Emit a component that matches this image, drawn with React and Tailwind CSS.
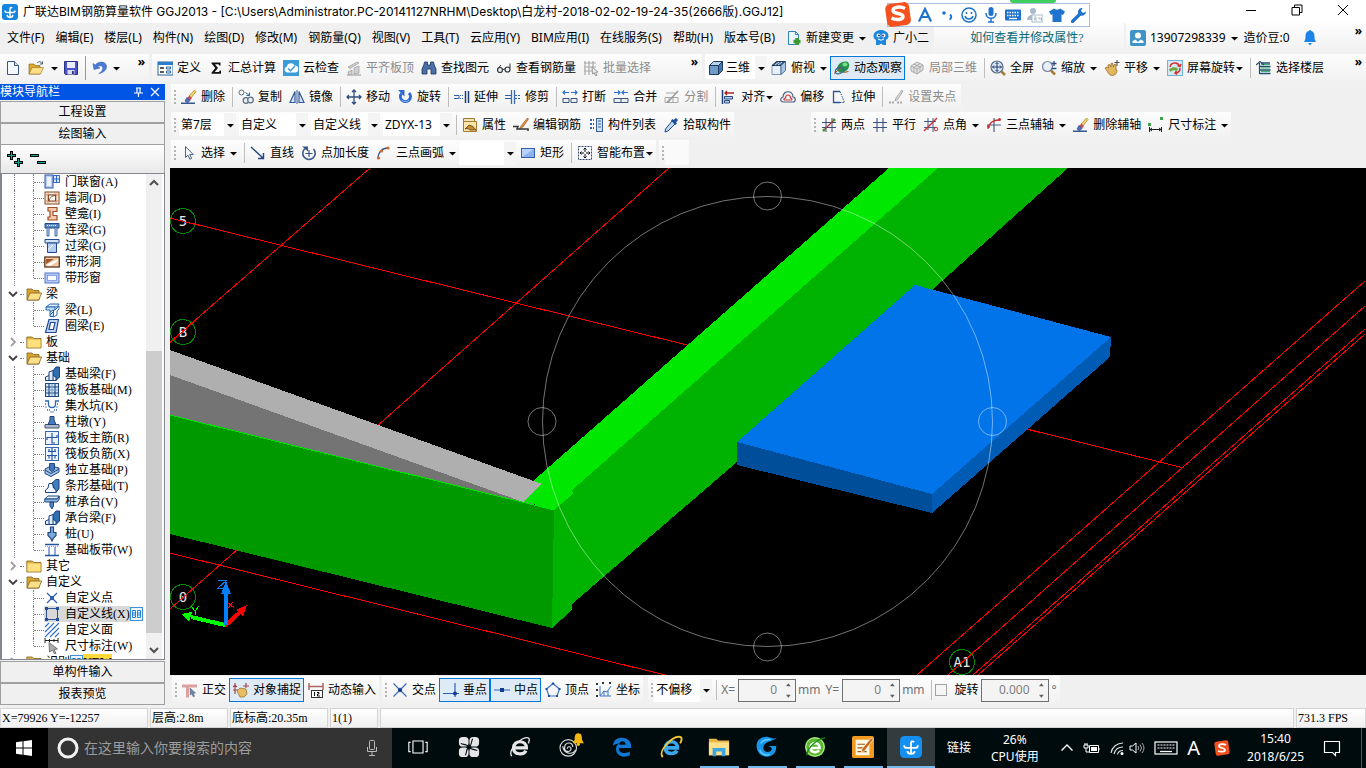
import { useState } from "react";

const UI_FONT = "font-['Noto_Sans','Noto_Sans_CJK_SC',sans-serif]";
const TITLE_FONT = "font-['Inter','Noto_Sans_CJK_SC',sans-serif]";
const SONG_FONT = "font-['Liberation_Serif','Noto_Sans_CJK_SC',serif]";

const BLUE = "#2f6fd0";

// 16x16 drawings
const ICONS = {
  logo: <><rect x="0" y="0" width="16" height="16" rx="3" fill="#1585e0" /><path d="M10.500 4Q8 2.500 8 5v8M3 6.500q0 2 2 2h6q2 0 2-2M5 11q.5 2.500 3 2.500T11 11" fill="none" stroke="#fff" strokeWidth="1.400" /></>,
  newDoc: <><path d="M2.500 1.500h7l4 4v9h-11z" fill="#f4f9ff" stroke="#3d5478" /><path d="M9.500 1.500v4h4" fill="#cfe0f5" stroke="#3d5478" /></>,
  open: <><path d="M1 4h5l1 1.500h5V14H1z" fill="#e0a92e" stroke="#7a5a12" strokeWidth=".6" /><path d="M4 7.500h11.500L12.500 14H1z" fill="#ffdf85" stroke="#8d6a1c" strokeWidth=".6" /><path d="M9 3c2-2 4-1.500 5 .5M14.500 1.500v2.500H12" fill="none" stroke="#4a5b78" /></>,
  save: <><path d="M1.500 1.500h13v13h-12l-1-1z" fill="#4b55c8" stroke="#2b3186" /><rect x="4" y="2" width="8" height="6" fill="#e9edff" /><rect x="4.500" y="10" width="7" height="4.500" fill="#d9dce8" /><rect x="9" y="11" width="1.800" height="3" fill="#2b3186" /></>,
  undo: <><path d="M1 3.500l1 6 6-1.500-2.200-1.300c2-2 5-1 5 1.500 0 2.300-1.800 4-4 5.300 4-.6 7.700-3 7.700-7C14.500 2 7.500 0 3.300 5z" fill="#4b7ad8" stroke="#2a55a8" strokeWidth=".5" /></>,
  define: <><rect x="1" y="2" width="15" height="13" fill="#fff" stroke="#2c6398" /><rect x="1" y="2" width="15" height="3" fill="#2c7cc9" /><path d="M3 8h4M3 12h4" stroke="#222" strokeWidth="1.500" /><path d="M9.500 7h4v2h-4zM9.500 11h4v2h-4z" fill="none" stroke="#2c6398" /></>,
  sigma: <path d="M3.500 2.500h9v3h-1.300l-.7-1.300H7L10 8l-3.300 4H11l.8-1.500H13v3.200H3.500v-1L7.300 8 3.500 3.500z" fill="#111" />,
  cloud: <><rect width="16" height="16" fill="#3a9bd9" /><path d="M4 12.500a3 3 0 0 1-.3-5.800A4.200 4.200 0 0 1 11.500 5.500 3.500 3.500 0 0 1 12 12.500z" fill="#fff" /><path d="M5 8.500l2.500 2.300L12 6" fill="none" stroke="#3a9bd9" strokeWidth="1.500" /></>,
  flatten: <><path d="M2 7l9-5 2 1-9 5.500zM2 12l4-2v4l-3 1zM8 8l5-2v7l-5 1z" fill="#d0d0d0" stroke="#999" strokeWidth=".7" /><path d="M1 15h14" stroke="#b0b0b0" strokeWidth="1.500" /></>,
  binoc: <path d="M3.500 2h3v3h3V2h3l.7 3 1.800 4v5h-5V9H6v5H1V9l1.800-4z" fill="#4c70a8" stroke="#1c3260" strokeWidth=".8" />,
  glasses: <><circle cx="4" cy="10" r="2.500" fill="#e8eef5" stroke="#333" strokeWidth="1.200" /><circle cx="11.500" cy="9.500" r="2.500" fill="#e8eef5" stroke="#333" strokeWidth="1.200" /><path d="M6.500 9.500l2.500-.5M2 8.500L5 5M14 8V3.500" fill="none" stroke="#333" /></>,
  batch: <><path d="M2 1v14M6 1v14M10 1v7M1 3h12M1 7h12M1 11h8" stroke="#aaa" strokeWidth="1.200" /><path d="M9 7l6 5-2.500.3 1.500 3-1.500.5-1.300-3L9.500 14z" fill="#eee" stroke="#999" /></>,
  cube: <><path d="M1.500 5.500h9v9h-9z" fill="#6f9cc8" stroke="#203a5c" /><path d="M1.500 5.500L5.500 1.500h9l-4 4z" fill="#b6d3ee" stroke="#203a5c" /><path d="M10.500 5.500l4-4v9l-4 4z" fill="#4778aa" stroke="#203a5c" /></>,
  topView: <><path d="M1 5.500h9v9H1z" fill="#e6f0fa" stroke="#7a93b0" /><path d="M1 5.500L5.500 1.500h9l-4.500 4z" fill="#315f92" stroke="#1b3454" /><path d="M10 5.500l4.500-4v9L10 14.500z" fill="#a9c7e4" stroke="#4f7094" /><path d="M4 5l4-3M7 5l4-3" stroke="#fff" strokeWidth=".8" /></>,
  orbit: <><path d="M3 9C3 4 8 1 12 1.500c4 .5 4 5 1.500 8S7 13 5 12.500z" fill="#259447" /><ellipse cx="11" cy="4.500" rx="2.500" ry="2" fill="#7bdc8a" /><path d="M1.500 12.500C.5 9 5 6.500 8 7.500s2 4-1 5.500-5 1-5.500-.5z" fill="none" stroke="#356a9c" strokeWidth="1.300" /><path d="M0 13.500L8 7M9.500 12.500l5-1" stroke="#a34a20" /></>,
  local3d: <><path d="M2 6l6-4 6 3v5l-6 4-6-3z" fill="#e2e2e2" stroke="#aaa" /><path d="M2 6l6 3 6-4M8 9v5M5 4l6 3M5 7.500v5M11 3.500L5 7.500M11 7v5" fill="none" stroke="#aaa" /></>,
  fullscreen: <><circle cx="7" cy="7" r="6" fill="#dbe8f6" stroke="#5a6a80" strokeWidth="1.200" /><path d="M7 2.500v9M2.500 7h9M5.500 4L7 2.500 8.500 4M5.500 10L7 11.500 8.500 10M4 5.500L2.500 7 4 8.500M10 5.500L11.500 7 10 8.500" fill="none" stroke="#223f73" /><path d="M11.500 11.500l3.500 3.500" stroke="#a87a35" strokeWidth="2.500" /></>,
  zoom: <><circle cx="6.500" cy="6.500" r="5" fill="#e8eff8" stroke="#74839a" strokeWidth="1.200" /><path d="M10 10.500l4 4" stroke="#a87a35" strokeWidth="2.500" /><path d="M13 1v5M10.500 3.500h5M10.500 8.500h5" stroke="#2c4e86" strokeWidth="1.300" /></>,
  pan: <><path d="M1 8l2-1 1.500 1L4 5l1.500-.5L7 7V3.500L8.500 3l1 4 1-3 1.500.5L12 9l1 2c-.5 3-2.500 4.500-5 4.500C5 15.500 4 12 1 8z" fill="#e2b65a" stroke="#8a6420" strokeWidth=".7" /><path d="M13 0v6M10.500 2.500h5" stroke="#444" /></>,
  screenRot: <><rect x=".5" y=".5" width="15" height="15" fill="#d5e9f7" stroke="#71b2d6" /><path d="M3 7a5 5 0 0 1 9.500-1M13 8c0 3-2 5-5 5M10.500 5.500L13 6.500l1-2.500M9.500 11L8 13l2 1.500" fill="none" stroke="#d8302a" strokeWidth="1.500" /><path d="M2.500 10.500l4-2 4 1" stroke="#71a83c" strokeWidth="3" fill="none" /></>,
  floors: <><path d="M5 3h9M3.500 6.500h11M3.500 10h11M3.500 13.500h11" stroke="#1f4f70" strokeWidth="1.500" /><path d="M5 4.500h9M5 8h9M5 11.500h9" stroke="#3fb56e" /><path d="M0 5l4-3.500L8 5M3.500 3v11" fill="none" stroke="#274a70" strokeWidth="1.200" /></>,
  brush: <><path d="M13.500 1L15 2.500 10 9 8 7z" fill="#f7d469" stroke="#8a6d1d" strokeWidth=".6" /><path d="M8.500 6.500L11 9l-2 2.500L6 9z" fill="#c84e58" /><path d="M6 8.500l3 3L6.500 14 4 12z" fill="#4f71bd" stroke="#223a75" strokeWidth=".6" /><path d="M0 13.500h14v1.500H0z" fill="#35578b" /></>,
  copy: <><circle cx="3.500" cy="3.500" r="2.500" fill="none" stroke="#5c6c80" /><circle cx="8" cy="11.500" r="2.800" fill="#e8edf4" stroke="#5c6c80" strokeWidth="1.200" /><circle cx="12.500" cy="11" r="2.800" fill="#e8edf4" stroke="#5c6c80" strokeWidth="1.200" /><path d="M7.500 3.500l4 3M11.500 3.500v3h-3" fill="none" stroke="#3767a6" /></>,
  mirror: <><path d="M6 2.500v11H1zM10 2.500v11h5z" fill="#d6e4f5" stroke="#335b96" strokeWidth="1.200" /><path d="M8 1v14" stroke="#335b96" /></>,
  move: <path d="M8 1v14M1 8h14M6 3l2-2 2 2M6 13l2 2 2-2M3 6L1 8l2 2M13 6l2 2-2 2" fill="none" stroke="#2f4f7c" strokeWidth="1.300" />,
  rotate: <><path d="M4.500 4.500a5 5 0 1 0 7.500-.5" fill="none" stroke="#2f6ad0" strokeWidth="3" /><path d="M1 1h6.500v6.500z" fill="#2f6ad0" /><path d="M4.500 11a5 5 0 0 0 7.500 0" fill="none" stroke="#86b4f3" /></>,
  extend: <><path d="M0 6.500h5v3H0" fill="none" stroke="#2f5faa" /><path d="M6 6.500h4M6 9.500h4" stroke="#2f5faa" strokeDasharray="1 1" /><path d="M11.500 2v12M14.500 2v12" stroke="#1f3f77" strokeWidth="1.500" /></>,
  trim: <><path d="M0 6.500h6M0 9.500h6" stroke="#2f5faa" /><path d="M10 6.500h5M10 9.500h5" stroke="#2f5faa" strokeDasharray="2 1" /><path d="M6.500 1v14M9.500 1v14" stroke="#3a6db0" strokeWidth="1.300" /></>,
  breakIcon: <><path d="M1 3.500h6M9 3.500h6M3 1.500l-2 2 2 2M13 1.500l2 2-2 2" fill="none" stroke={BLUE} strokeWidth="1.200" /><path d="M1 9.500h6v4H1zM9 9.500h6v4H9z" fill="#eee" stroke="#38537c" /></>,
  merge: <><path d="M1 3.500h6M9 3.500h6M5 1.500l2 2-2 2M11 1.500l-2 2 2 2" fill="none" stroke={BLUE} strokeWidth="1.200" /><path d="M1 9.500h14v4H1zM8 9.500v4" fill="#eee" stroke="#38537c" /></>,
  split: <><path d="M1 8.500h13v5H1zM5 8.500v5M9 8.500v5M2 4h10" fill="none" stroke="#a8a8a8" /><path d="M14 2L5 12l-2 1" fill="none" stroke="#999" strokeWidth="1.500" /></>,
  align: <><path d="M1.500 1v14" stroke="#1f3f77" strokeWidth="1.500" /><path d="M3.500 7.500h8v2.500h-8zM3.500 11.500h5v2.500h-5z" fill="#b4cff0" stroke="#2c4a80" /><path d="M4 4h9M6 2L4 4l2 2" fill="none" stroke="#b32525" strokeWidth="1.400" /></>,
  offset: <><path d="M3 13C-1 12 1 8 3 8c0-7 10-7 10 0 3 0 3 5 0 5z" fill="#eef2f8" stroke="#4b5f80" strokeWidth="1.200" /><path d="M5 11c-2 0-1-2 .5-2 0-4 5-4 5 0 1.500 0 2 2 .5 2z" fill="none" stroke="#ce4036" strokeWidth="1.200" /></>,
  stretch: <><path d="M9 2.500H2.500v11H9" fill="none" stroke="#2c5694" strokeWidth="1.300" /><path d="M9 2.500l4.500 11H9" fill="none" stroke="#2c5694" strokeDasharray="1.500 1" /></>,
  gripPt: <><path d="M14 1L8 9l-1 3 3-2 5-8z" fill="#ddd" stroke="#aaa" /><path d="M1 13.500h5M9 13.500h5" stroke="#aaa" strokeWidth="2" strokeDasharray="2 1" /></>,
  props: <><path d="M1.500 1.500h11v3h-11z" fill="#f3e3b8" stroke="#9c7a2e" /><path d="M1.500 4.500h13v10h-13z" fill="#fbe6a8" stroke="#a57c2b" /><path d="M3 12l4-4 4 1.500 3 3.500H8l-2-1.500z" fill="#c98a30" stroke="#553c16" strokeWidth=".8" /></>,
  editRebar: <><path d="M14.500 1L8 9l-1.500 3L10 10l5.500-8z" fill="#e5973a" stroke="#7e4a18" strokeWidth=".6" /><path d="M0 9.500h5L4 12h8M12 12h3v2" fill="none" stroke="#333" strokeWidth="1.500" /></>,
  compList: <><path d="M2 3h4M2 7h4M2 11h4" stroke="#3b5f97" strokeWidth="2" strokeDasharray="2 1" /><rect x="8.500" y="1.500" width="6" height="13" fill="#cfe0f5" stroke="#3b5f97" /><path d="M10 4h3M10 7h3M10 10h3" stroke="#3b5f97" /></>,
  picker: <><path d="M9 4l3 3-7 7-3 1 .5-3z" fill="#bcd8f4" stroke="#27497c" /><path d="M8 3.500L12.500 8 14 6.500l-1-1 2-2.500L13 1l-2.500 2-1-1z" fill="#1f4f9a" /></>,
  twoPt: <><path d="M5 1v14M11 1v14M1 5.500h14M1 10.500h14" stroke="#3c4f75" /><path d="M2 14L14 2" stroke="#a33" strokeWidth="1.200" /><circle cx="3" cy="13" r="1.500" fill="#46953a" /><circle cx="13" cy="3" r="1.500" fill="#46953a" /></>,
  parallel: <path d="M5 1v14M11 1v14M1 5.500h14M1 10.500h14" stroke="#3c4f85" strokeWidth="1.100" />,
  ptAngle: <><path d="M5 1v12M10 1v14M1 4.500h12M1 10.500h12" stroke="#3c5d95" /><path d="M1 14L14 1" stroke="#c93131" strokeWidth="1.500" /><circle cx="13" cy="12" r="1.800" fill="none" stroke="#c93131" /></>,
  aux3: <><path d="M8 1v14M1 8h14" stroke="#4c5f86" strokeWidth="1.200" /><path d="M2 12C3 6 6 3 13 3" fill="none" stroke="#c93131" strokeWidth="1.300" /><circle cx="13.500" cy="2.500" r="1.500" fill="#c93131" /><circle cx="2.500" cy="9.500" r="1.500" fill="#c93131" /></>,
  dim: <><rect x="0" y="6" width="3" height="3" fill="#3ea447" /><rect x="12" y="0" width="3" height="3" fill="#3ea447" /><path d="M1.500 10v5M13.500 10v5M2 12.500h11M4 11l-2 1.500L4 14M11 11l2 1.500-2 1.500" fill="none" stroke="#222" /></>,
  select: <path d="M4.500 1.500v11l2.500-2.300 1.800 4 1.800-.8-1.800-3.800h3.500z" fill="#f5f7fa" stroke="#4d6180" />,
  line: <path d="M1 2l12 11M13.500 8v5.500H8" fill="none" stroke="#24467e" strokeWidth="1.400" />,
  ptLen: <><path d="M4 3.500a6.200 6.200 0 1 0 8.500.5" fill="none" stroke="#3a5688" strokeWidth="1.600" /><path d="M8 5v7M4.500 8.500h7" stroke="#3a5688" strokeWidth="1.200" /><path d="M1 1.500h6v5z" fill="#3a5688" /></>,
  arc3: <><path d="M2 14C2 7 6 3 12 3" fill="none" stroke="#34558c" strokeWidth="1.300" /><circle cx="2.500" cy="13" r="1.600" fill="#d8652b" /><circle cx="5.500" cy="6" r="1.600" fill="#d8652b" /><circle cx="12" cy="3" r="1.600" fill="#d8652b" /></>,
  rect: <><rect x="1.500" y="3.500" width="13" height="9" fill="#8db3ee" stroke="#2f5fae" /><path d="M2 4h12L2 12z" fill="#b9d2f7" /></>,
  smart: <><rect x="1.500" y="1.500" width="13" height="13" fill="#f5f8fc" stroke="#34486a" strokeDasharray="2 1" /><path d="M8 3v4M8 9v4M3 8h4M9 8h4M6.500 4.500L8 3l1.500 1.500M6.500 11.500L8 13l1.500-1.500M4.500 6.500L3 8l1.500 1.500M11.500 6.500L13 8l-1.500 1.500" fill="none" stroke="#111" /></>,
  docPlus: <><path d="M2.500 1.500h7l3 3v10h-10z" fill="#eaf5fd" stroke="#3182b5" /><path d="M9.500 1.500v3h3" fill="none" stroke="#3182b5" /><path d="M11 8v7M7.500 11.500h7" stroke="#3c9a2e" strokeWidth="3.500" /></>,
  mascot: <><path d="M8 0c4 0 7.500 2.500 7.500 6 0 2-1 3-2.500 4v5h-3l-2-1.500L6 15H3v-5C1.500 9 .5 8 .5 6 .5 2.500 4 0 8 0z" fill="#1c87dc" /><circle cx="5.500" cy="5.500" r="1.900" fill="#fff" /><circle cx="10.500" cy="5.500" r="1.900" fill="#fff" /><circle cx="6" cy="5.500" r=".9" fill="#124" /><circle cx="10" cy="5.500" r=".9" fill="#124" /><path d="M5 9q3 2.500 6 0" fill="none" stroke="#fff" /></>,
  user: <><rect width="16" height="16" rx="2" fill="#3f93c6" /><circle cx="8" cy="5.500" r="3" fill="#fff" /><path d="M2.500 13v-2l3-1.500L8 12l2.500-2.500 3 1.500v2z" fill="#fff" /></>,
  bell: <><path d="M8 0a1 1 0 0 1 1 1c3 .7 3.500 3 3.500 6 0 2 .5 3.500 1.500 5H2c1-1.500 1.500-3 1.500-5 0-3 .5-5.300 3.500-6a1 1 0 0 1 1-1z" fill="#1c83e8" /><path d="M6 13h4L8 15.500z" fill="#1c83e8" /></>,
  ortho: <><path d="M0 2.500h15v3H7v10H4V5.500H0z" fill="#dba0a0" /><path d="M8 6l5.500 5-2.300.3 1.300 3-1.300.5-1.300-3L8.300 13z" fill="#6e87a8" stroke="#44566e" strokeWidth=".5" /></>,
  snap: <><path d="M2 1v11M0 8h6M13 1v5M10 4h6M0 5l2-2 2 2" fill="none" stroke="#a34a4a" strokeWidth="1.200" /><path d="M4 9l3-3 6 1 1 5-3 3H7z" fill="#e8bd62" stroke="#8f6a20" strokeWidth=".7" /></>,
  dynIn: <><path d="M1 1v7M15 1v7M1 4.500h14" stroke="#b06464" strokeWidth="1.500" /><rect x="3.500" y="8.500" width="11" height="7" fill="#fff" stroke="#333" /><path d="M6.500 10v4M9 10.500h2v1.500H9.500V14H12" fill="none" stroke="#111" /></>,
  cross: <><path d="M1.500 1.500l13 13M14.500 1.500l-13 13" stroke="#3a6cb4" strokeWidth="1.200" /><path d="M8 5.500l2.500 2.500L8 10.500 5.500 8z" fill="#14398a" /></>,
  perp: <><path d="M12 1v14M0 11.500h16" stroke="#2860b8" strokeWidth="1.200" /><circle cx="12" cy="11.500" r="2" fill="#123b8c" /></>,
  mid: <><path d="M0 8h16" stroke="#5a82c0" strokeWidth="1.300" /><rect x="6" y="6" width="4" height="4" fill="#123b8c" /></>,
  vertex: <><path d="M8 1.500L14.500 7 12 14H4L1.500 7z" fill="none" stroke="#3a76c8" strokeWidth="1.200" /><path d="M8 0l1.500 1.500L8 3 6.500 1.500zM13.500 6h2v2h-2zM.5 6h2v2h-2zM3 13h2v2H3zM11 13h2v2h-2z" fill="#1d4ea0" /></>,
  coord: <><path d="M4 4v10h11M4 14l4-5 3 1 4-6M8 9v5M12 9v5" fill="none" stroke="#3a76c8" /><path d="M0 1h2v2H0zM6 0h2v2H6zM13 0h2v2h-2zM0 7h2v2H0zM0 13h2v2H0z" fill="#333" /></>,

  // component tree
  doorWin: <><rect x="1" y="1" width="8" height="13" fill="#b9cdf4" stroke="#2f55a8" /><rect x="3" y="3" width="4" height="9" fill="#eef4ff" /><path d="M9.500 1.500h6v7h-6zM9.500 5h6M12.500 1.500v7" fill="#dfeafc" stroke="#2f67c8" /></>,
  wallHole: <><rect x="1" y="2" width="14" height="12" fill="#fbe9dc" stroke="#7b4a2a" /><path d="M1 5h14M1 11h14M4 2v12M12 2v12" stroke="#d28a60" /><path d="M4.500 5h7v6h-7z" fill="#fff" stroke="#7b4a2a" /><path d="M5 11C6 7 8 6 11 5.500" fill="none" stroke="#7b4a2a" /></>,
  niche: <path d="M4 1.500h9v4H9v4h4v4.500H4v-3h2V5H4z" fill="#f3c8ab" stroke="#9c4e26" strokeWidth="1.200" />,
  linkBeam: <><path d="M1 1.500h14V6H1z" fill="#5a88c6" stroke="#1d4a90" /><path d="M3 6v8h2V6M11 6v8h2V6" fill="#c7dbf4" stroke="#1d4a90" strokeWidth=".8" /><path d="M3 3.500h10" stroke="#fff" strokeDasharray="1 1" /></>,
  lintel: <><path d="M1 1.500h14V5H1z" fill="#d5e3f7" stroke="#1d4a90" /><path d="M3.500 5h9v9.500h-9z" fill="#b5cdf0" stroke="#1d4a90" /><path d="M4 12l5-5" stroke="#fff" /></>,
  stripHole: <><rect x=".8" y="3" width="14.500" height="10" fill="#f3c9a4" stroke="#5b3a20" strokeWidth="1.300" /><path d="M2 11L14 5v2L6 12z" fill="#fff" /><path d="M2 5h8l-8 5z" fill="#9c5a2e" /></>,
  stripWin: <><rect x="1" y="3" width="14" height="10" fill="#b5c9f4" stroke="#5576cc" /><rect x="3.500" y="5.500" width="9" height="5" fill="#f7faff" stroke="#6b88d4" strokeWidth=".7" /></>,
  beam: <><path d="M2 5l4-3h9l-2 3z" fill="#e2effb" stroke="#2667ae" /><path d="M2 5h9v3H9.500v6.500H6V8H2z" fill="#bfe0f7" stroke="#2667ae" /><path d="M11 8l4-4v3l-2 2v4l-3.500 2M6 10l3-2M6 13l3-3" fill="none" stroke="#2667ae" /></>,
  ringBeam: <path d="M5 1.500h9.500L12 14.500H1.500zM6.500 4.500h4.500L9.500 11.500H5z" fill="#c7d7f3" fillRule="evenodd" stroke="#1f4b9c" strokeWidth="1.200" />,
  folder: <><path d="M.8 3h5.500l1.500 1.500H15v9.500H.8z" fill="#e2b13c" stroke="#7d6120" strokeWidth=".8" /><path d="M1.500 5.500h13v8h-13z" fill="#ffdf7e" /></>,
  folderOpen: <><path d="M1 3h5l1.500 1.500H13V14H1z" fill="#d9a52e" stroke="#7d6120" strokeWidth=".8" /><path d="M4 7h11.700l-3 7H1z" fill="#ffe08a" stroke="#7d6120" strokeWidth=".8" /></>,
  foundBeam: <><path d="M8 6l4-5h3.500v10L12 14.500z" fill="#2f6fb0" stroke="#173f7a" /><path d="M1.500 14.500V11L5 9.500V6l4-1.500v5l3 1.500v3.500z" fill="#dfecfa" stroke="#173f7a" /><path d="M5 14V9.500M9 14V9.500" stroke="#173f7a" /></>,
  raft: <><rect x="1.500" y="1.500" width="13" height="13" fill="#d9e6f6" stroke="#1e4880" /><path d="M5 2v12M11 2v12M2 5h12M2 11h12" stroke="#1e4880" strokeWidth="1.200" /><path d="M8 2v12M2 8h12" stroke="#6f97cc" /></>,
  pit: <><path d="M1 3h3.500v3.500c0 4 7 4 7 0V3H15" fill="none" stroke="#2f66b0" strokeWidth="1.300" /><path d="M1 6h2M1.500 9h2M3 12h3M6.500 14h3M10 12h3M12.500 9h2M13 6h2" stroke="#2f66b0" strokeWidth="1.500" strokeDasharray="1 1" /></>,
  pier: <><path d="M1 10.500h14v3.500H1z" fill="#aab9cd" stroke="#44566e" /><path d="M6 2.500h4V6l2 4.500H4L6 6z" fill="#4b7cc2" stroke="#1d4175" /></>,
  raftMain: <><rect x="1.500" y="1.500" width="13" height="13" fill="#edf4fd" stroke="#3367b4" /><path d="M8 3v10h3M3 10V7.500h10V5" fill="none" stroke="#2355a5" strokeWidth="1.200" /></>,
  raftNeg: <><rect x="1.500" y="1.500" width="13" height="13" fill="#edf4fd" stroke="#3367b4" /><path d="M8 2v12M4 5.500h8M3 9.500h10M5 3v2.500M11 3v2.500M5 9.500v3M11 9.500v3" stroke="#2355a5" strokeWidth="1.200" /></>,
  isolated: <><path d="M1 7l6-3 8 2v4l-8 4.500-6-3z" fill="#9ec0e6" stroke="#1e4880" /><path d="M5.500 1.500h5v6l-2.500 2-2.500-2z" fill="#4376b4" stroke="#1e4880" /><path d="M1 8l6 3.500L15 7" fill="none" stroke="#1e4880" /></>,
  strip: <><path d="M8 5l4-3.500h3v9L12 14.500z" fill="#3f7fc0" stroke="#173f7a" /><path d="M1.500 14.500V12l2.500-2 1-4.500h3.500L9.500 10l2.500 2v2.500z" fill="#f2f7fd" stroke="#173f7a" /></>,
  pileCap: <><path d="M.8 5l3-3h11.500l-2 3z" fill="#e5effb" stroke="#1e4880" /><path d="M.8 5h12.500l2-3v3l-2 3H.8z" fill="#8fb5e0" stroke="#1e4880" /><path d="M6 8h3.500v4L8 15l-2-3z" fill="#5285c4" stroke="#1e4880" /></>,
  pile: <path d="M6.500 1h3v5.500H12v3L9.500 12 8 15l-1.500-3L4 9.500v-3h2.500z" fill="#7fa8dc" stroke="#1e4880" strokeWidth="1.200" />,
  raftBelt: <><path d="M1 2.500h14M1 13.500h14" stroke="#2355a5" strokeWidth="1.500" /><path d="M5 5v8M11 5v8" stroke="#2355a5" /><path d="M1 4.500h14" stroke="#7fa0d4" strokeDasharray="1 1" /></>,
  customPt: <><path d="M3 3l10 10M13 3L3 13" stroke="#2c5fae" strokeWidth="1.200" /><rect x="6" y="6" width="4" height="4" fill="#2c5fae" /></>,
  customLn: <><rect x="2.500" y="2.500" width="11" height="11" fill="none" stroke="#2c4f96" /><path d="M1 1h3v3H1zM12 1h3v3h-3zM1 12h3v3H1zM12 12h3v3h-3z" fill="#244c9e" /></>,
  customFace: <path d="M1 5l4-4M1 10l9-9M1 15L15 1M6 15l9-9M11 15l4-4" stroke="#2f6fc8" strokeWidth="1.100" />,
  dimTree: <><path d="M1 0v5M14 0v5M1 2.500h13M5.500 1v3M10 1v3" stroke="#222" /><path d="M5 4.500l8.500 6.500-3.500.5 2 4-1.500.5-2-4L5.500 14z" fill="#aaa" stroke="#777" /></>,
};

function Icon({ name, className = "size-4" }) {
  return <svg viewBox="0 0 16 16" className={`shrink-0 ${className}`} aria-hidden="true">{ICONS[name]}</svg>;
}

const Caret = () => (
  <svg viewBox="0 0 8 8" className="size-2 shrink-0" aria-hidden="true"><path d="M1 3h7L4.500 6.500z" fill="#000" /></svg>
);

const Sep = () => <span className="ml-1 mr-px h-5 w-px shrink-0 bg-[#bdbdbd]" />;

const Grip = () => (
  <span className="ml-[3px] mr-px flex shrink-0 flex-col gap-[2px]">
    {[0, 1, 2, 3].map(i => <i key={i} className="size-[2px] bg-[#b4b4b4]" />)}
  </span>
);

const More = () => <button type="button" aria-label="更多" className="ml-auto self-start pr-1 font-bold">»</button>;

function Bar({ children, className = "" }) {
  return (
    <div className={`flex h-full items-center bg-linear-to-b from-[#fdfdfd] to-[#f1f1f1] ${className}`}>
      {children}
    </div>
  );
}

function Tool({ icon, label, menu, tight, active, disabled }) {
  return (
    <button type="button" disabled={disabled} aria-pressed={active}
      className={`flex h-6 shrink-0 items-center border pl-[3px] pr-[2px] whitespace-nowrap
        ${tight ? "" : "gap-1"}
        ${active ? "border-[#0078d7] bg-[#deebf7]" : "border-transparent"}
        ${disabled ? "text-[#8c8c8c]" : "text-black"}`}>
      <Icon name={icon} />
      <span className={tight ? "ml-1" : ""}>{label}</span>
      {menu && <Caret />}
    </button>
  );
}

function Combo({ options, label, icon, width }) {
  return (
    <div className={`relative flex h-[23px] shrink-0 items-center bg-white ${width}`}>
      {icon && <Icon name={icon} className="ml-[3px] size-4" />}
      <select aria-label={label} className="h-full w-full appearance-none bg-transparent pl-[2px] text-xs outline-none">
        {options.map(o => <option key={o}>{o}</option>)}
      </select>
      <span className="pointer-events-none absolute inset-y-0 right-0 flex w-3 items-center bg-[#f4f4f4] pl-[2px]"><Caret /></span>
    </div>
  );
}

function Spin({ label, value, width }) {
  return (
    <div className={`flex h-[23px] shrink-0 items-center border border-[#707070] bg-[#f4f4f4] ${width}`}>
      <input aria-label={label} defaultValue={value} className="w-full min-w-0 bg-transparent text-right text-[#808080] outline-none" />
      <svg viewBox="0 0 18 22" className="h-full w-[18px] shrink-0" aria-hidden="true">
        <path d="M9 6.500L11.500 3.500 14 6.500zM9 15.500L11.500 18.500 14 15.500z" fill="#606060" />
      </svg>
    </div>
  );
}

const MENUS = [
  "文件(F)", "编辑(E)", "楼层(L)", "构件(N)", "绘图(D)", "修改(M)", "钢筋量(Q)", "视图(V)",
  "工具(T)", "云应用(Y)", "BIM应用(I)", "在线服务(S)", "帮助(H)", "版本号(B)",
];

function TitleBar() {
  return (
    <header className="relative flex h-[23px] shrink-0 items-center bg-white pl-[2px]">
      <Icon name="logo" />
      <h1 className={`ml-[5px] flex-1 truncate ${TITLE_FONT}`}>
        广联达BIM钢筋算量软件 GGJ2013 - [C:\Users\Administrator.PC-20141127NRHM\Desktop\白龙村-2018-02-02-19-24-35(2666版).GGJ12]
      </h1>
      <div className="flex items-center">
        {[
          ["最小化", "M1 6.500h10"],
          ["还原", "M1 3.500h7.500V11H1zM3.500 3.500V1H11v7.500H8.500"],
          ["关闭", "M1 1l10 10M11 1L1 11"],
        ].map(([name, d]) => (
          <button key={name} type="button" aria-label={name} className="flex w-[46px] justify-center pb-1">
            <svg viewBox="0 0 12 12" className="size-3"><path d={d} fill="none" stroke="#000" /></svg>
          </button>
        ))}
      </div>

      {/* input method bar floats over the title and the menu */}
      <div className="absolute right-[310px] top-0 h-[3px] w-[46px] rounded-b-full bg-[#3fcf5c]" />
      <div className="absolute right-[276px] top-[3px] z-10 flex h-6 w-[203px] items-center gap-[6px] border border-[#a9bfdc] bg-white pl-[29px] text-[#1f73cc]">
        <svg viewBox="0 0 28 28" className="absolute -left-1 -top-1 size-7" aria-hidden="true">
          <rect x="2" y="3" width="24" height="23" rx="5" fill="#f4511e" transform="rotate(-8 14 14)" />
          <path d="M21 8.500c-5-2.500-12-1.500-12 2 0 4 10 2 10 6 0 3.500-7 4-11.500 1.500" fill="none" stroke="#fff" strokeWidth="3.500" />
        </svg>
        <svg viewBox="0 0 16 16" className="size-4"><path d="M2 14.500L8 2l6 12.500M4.500 10h7" fill="none" stroke="currentColor" strokeWidth="2.200" /></svg>
        <svg viewBox="0 0 16 16" className="size-4"><circle cx="5" cy="6" r="1.800" fill="currentColor" /><path d="M11 7.500c2 1.500 1.500 4-.5 5" fill="none" stroke="currentColor" strokeWidth="2" /></svg>
        <svg viewBox="0 0 16 16" className="size-4"><circle cx="8" cy="8" r="7" fill="none" stroke="currentColor" strokeWidth="1.500" /><path d="M5.500 5v2M10.500 5v2M4 9c1 4 7 4 8 0" fill="none" stroke="currentColor" strokeWidth="1.500" /></svg>
        <svg viewBox="0 0 16 16" className="size-4"><rect x="5.500" y="0" width="5" height="9" rx="2.500" fill="currentColor" /><path d="M3 6c0 7 10 7 10 0M8 11v4M5 15h6" fill="none" stroke="currentColor" strokeWidth="1.500" /></svg>
        <svg viewBox="0 0 16 16" className="size-4"><rect x="0" y="2.500" width="16" height="11" rx="1" fill="currentColor" /><path d="M2 5.500h12M2 8.500h12" stroke="#fff" strokeWidth="1.300" strokeDasharray="1.500 1" /><path d="M4 11.500h8" stroke="#fff" strokeWidth="1.300" /></svg>
        <svg viewBox="0 0 16 16" className="size-4"><circle cx="6" cy="4" r="3" fill="#a9b9cc" /><path d="M0 13c0-7 12-7 12 0z" fill="#a9b9cc" /><rect x="5" y="8" width="11" height="7" fill="#fff" stroke="#a9b9cc" /><path d="M7 10h2v1.500H7.500V13H10M12 10v2h2.500M14.500 10v4" fill="none" stroke="#a9b9cc" /></svg>
        <svg viewBox="0 0 16 16" className="size-4"><path d="M5 1.500c1 1.500 5 1.500 6 0l5 3-2 3.500-1.500-.8V15h-9V7.200L2 8 0 4.500z" fill="currentColor" /></svg>
        <svg viewBox="0 0 16 16" className="size-4"><path d="M1.500 14.500l7-7" stroke="currentColor" strokeWidth="3.200" strokeLinecap="round" /><path d="M15 4.500l-3 1.500-2-2L11.500 1C8 .5 6 4 7.500 7s7 2.500 7.500-2.500z" fill="currentColor" /></svg>
      </div>
    </header>
  );
}

function MenuBar() {
  return (
    <div className="flex h-[31px] shrink-0 gap-[2px] bg-[#f0f0f0] pb-[2px]">
      <nav className="flex shrink-0 items-center gap-[11px] pl-[7px]">
        {MENUS.map(m => <button key={m} type="button" className="whitespace-nowrap">{m}</button>)}
        <span className="-ml-1 flex items-center">
          <Tool icon="docPlus" label="新建变更" menu />
          <Tool icon="mascot" label="广小二" />
        </span>
      </nav>
      <Bar className="flex-1 justify-center pr-1">
        <a href="#help" className={`text-[#0c6a78] ${SONG_FONT}`}>如何查看并修改属性?</a>
      </Bar>
      <Bar className="w-[240px] shrink-0">
        <Tool icon="user" label="13907298339" menu />
        <span className="ml-[3px]">造价豆:0</span>
        <button type="button" aria-label="通知" className="ml-3"><Icon name="bell" /></button>
        <More />
      </Bar>
    </div>
  );
}

function MainToolbar() {
  return (
    <div className="flex h-[29px] shrink-0 gap-[3px] bg-[#f0f0f0] pb-[2px]">
      <Bar className="w-[149px] shrink-0 pl-[5px]">
        <button type="button" aria-label="新建"><Icon name="newDoc" /></button>
        <button type="button" aria-label="打开" className="ml-[7px] flex items-center gap-[6px]"><Icon name="open" /><Caret /></button>
        <button type="button" aria-label="保存" className="ml-[5px]"><Icon name="save" /></button>
        <span className="ml-[6px] mr-[6px] h-6 w-px bg-[#9a9a9a]" />
        <button type="button" aria-label="撤销" className="flex items-center gap-1"><Icon name="undo" /><Caret /></button>
        <More />
      </Bar>
      <Bar className="w-[550px] shrink-0 pl-px">
        <Tool icon="define" label="定义" />
        <Tool icon="sigma" label="汇总计算" />
        <Tool icon="cloud" label="云检查" />
        <Tool icon="flatten" label="平齐板顶" disabled />
        <Tool icon="binoc" label="查找图元" />
        <Tool icon="glasses" label="查看钢筋量" />
        <Tool icon="batch" label="批量选择" disabled />
        <More />
      </Bar>
      <Bar className="min-w-0 flex-1">
        <Combo icon="cube" label="视图模式" options={["三维", "二维"]} width="w-[62px]" />
        <Tool icon="topView" label="俯视" menu />
        <Tool icon="orbit" label="动态观察" active />
        <Tool icon="local3d" label="局部三维" disabled />
        <Sep />
        <Tool icon="fullscreen" label="全屏" />
        <Tool icon="zoom" label="缩放" menu />
        <Tool icon="pan" label="平移" menu />
        <Tool icon="screenRot" label="屏幕旋转" menu tight />
        <Sep />
        <Tool icon="floors" label="选择楼层" />
        <More />
      </Bar>
    </div>
  );
}

function EditToolbars() {
  return (
    <div className="flex shrink-0 flex-col gap-[3px] bg-[#f0f0f0] pb-[2px] pl-px">
      <div className="flex h-[25px]">
        <Bar className="pr-[2px]">
          <Grip />
          <Tool icon="brush" label="删除" /><Sep />
          <Tool icon="copy" label="复制" />
          <Tool icon="mirror" label="镜像" /><Sep />
          <Tool icon="move" label="移动" />
          <Tool icon="rotate" label="旋转" /><Sep />
          <Tool icon="extend" label="延伸" />
          <Tool icon="trim" label="修剪" /><Sep />
          <Tool icon="breakIcon" label="打断" />
          <Tool icon="merge" label="合并" />
          <Tool icon="split" label="分割" disabled /><Sep />
          <Tool icon="align" label="对齐" menu tight />
          <Tool icon="offset" label="偏移" />
          <Tool icon="stretch" label="拉伸" /><Sep />
          <Tool icon="gripPt" label="设置夹点" disabled />
        </Bar>
      </div>
      <div className="flex h-[25px] gap-[77px]">
        <Bar>
          <Grip />
          <div className="flex gap-[3px] pl-[2px]">
            <Combo label="楼层" options={["第7层"]} width="w-[57px]" />
            <Combo label="构件类别" options={["自定义"]} width="w-[69px]" />
            <Combo label="构件类型" options={["自定义线"]} width="w-[69px]" />
            <Combo label="构件" options={["ZDYX-13"]} width="w-[69px]" />
          </div>
          <Sep />
          <Tool icon="props" label="属性" />
          <Tool icon="editRebar" label="编辑钢筋" />
          <Tool icon="compList" label="构件列表" />
          <Tool icon="picker" label="拾取构件" />
        </Bar>
        <Bar>
          <Grip />
          <Tool icon="twoPt" label="两点" />
          <Tool icon="parallel" label="平行" />
          <Tool icon="ptAngle" label="点角" menu />
          <Tool icon="aux3" label="三点辅轴" menu />
          <Tool icon="brush" label="删除辅轴" />
          <Tool icon="dim" label="尺寸标注" menu />
        </Bar>
      </div>
      <div className="flex h-[26px] gap-[3px]">
        <Bar>
          <Grip />
          <Tool icon="select" label="选择" menu /><Sep />
          <Tool icon="line" label="直线" />
          <Tool icon="ptLen" label="点加长度" />
          <Tool icon="arc3" label="三点画弧" menu />
          <Combo label="半径" options={[""]} width="w-[57px]" />
          <Tool icon="rect" label="矩形" /><Sep />
          <Tool icon="smart" label="智能布置" menu tight />
        </Bar>
        <Bar className="w-[30px]"><Grip /><span className="h-6 flex-1 bg-[#fafafa]" /></Bar>
      </div>
    </div>
  );
}

const TREE = [
  { icon: "doorWin", label: "门联窗(A)" },
  { icon: "wallHole", label: "墙洞(D)" },
  { icon: "niche", label: "壁龛(I)" },
  { icon: "linkBeam", label: "连梁(G)" },
  { icon: "lintel", label: "过梁(G)" },
  { icon: "stripHole", label: "带形洞" },
  { icon: "stripWin", label: "带形窗", last: true },
  { group: true, open: true, label: "梁" },
  { icon: "beam", label: "梁(L)" },
  { icon: "ringBeam", label: "圈梁(E)", last: true },
  { group: true, label: "板" },
  { group: true, open: true, label: "基础" },
  { icon: "foundBeam", label: "基础梁(F)" },
  { icon: "raft", label: "筏板基础(M)" },
  { icon: "pit", label: "集水坑(K)" },
  { icon: "pier", label: "柱墩(Y)" },
  { icon: "raftMain", label: "筏板主筋(R)" },
  { icon: "raftNeg", label: "筏板负筋(X)" },
  { icon: "isolated", label: "独立基础(P)" },
  { icon: "strip", label: "条形基础(T)" },
  { icon: "pileCap", label: "桩承台(V)" },
  { icon: "foundBeam", label: "承台梁(F)" },
  { icon: "pile", label: "桩(U)" },
  { icon: "raftBelt", label: "基础板带(W)", last: true },
  { group: true, label: "其它" },
  { group: true, open: true, label: "自定义" },
  { icon: "customPt", label: "自定义点" },
  { icon: "customLn", label: "自定义线(X)", book: true },
  { icon: "customFace", label: "自定义面" },
  { icon: "dimTree", label: "尺寸标注(W)", last: true },
  { group: true, label: "识别", book: true, isNew: true },
];

const Book = () => (
  <svg viewBox="0 0 13 14" className="h-[14px] w-[13px] shrink-0" aria-hidden="true">
    <rect x=".5" y=".5" width="12" height="13" fill="#eaf5ff" stroke="#3d8fd8" />
    <path d="M2.500 3.500h3v7h-3zM7.500 3.500h3v7h-3zM3 6h2M8 6h2M3 8h2M8 8h2" fill="none" stroke="#2783d6" />
  </svg>
);

function TreeRow({ item, selected, onSelect }) {
  if (item.group) {
    return (
      <li className="flex h-4 items-center pl-[6px]">
        <svg viewBox="0 0 10 10" className="size-[10px] shrink-0" aria-hidden="true">
          <path d={item.open ? "M1 3l4 4 4-4" : "M3 1l4 4-4 4"} fill="none" stroke={item.open ? "#404040" : "#a0a0a0"} strokeWidth="1.800" />
        </svg>
        <span className="mx-[2px] w-1 border-t border-dotted border-[#808080]" />
        <Icon name={item.open ? "folderOpen" : "folder"} />
        <button type="button" className="ml-1 whitespace-nowrap leading-4">{item.label}</button>
        {item.book && <Book />}
        {item.isNew && <b className="bg-[#ffd83a] leading-4">NEW</b>}
      </li>
    );
  }
  return (
    <li className="flex h-4 items-center">
      <span className="ml-[12px] w-px self-stretch border-l border-dotted border-[#808080]" />
      <span className={`ml-[18px] border-l border-dotted border-[#808080] ${item.last ? "h-2 self-start" : "h-4"}`} />
      <span className="w-[10px] border-t border-dotted border-[#808080]" />
      <span className={`flex items-center ${selected ? "bg-[#d9d9d9]" : ""}`}>
        <Icon name={item.icon} />
        <button type="button" onClick={onSelect} className="ml-[5px] whitespace-nowrap leading-4">{item.label}</button>
      </span>
      {item.book && <Book />}
    </li>
  );
}

function PanelButton({ children }) {
  return (
    <button type="button" className="h-[22px] w-full shrink-0 border border-[#a0a0a0] bg-[#f0f0f0] leading-5">
      {children}
    </button>
  );
}

function Sidebar() {
  const [selected, setSelected] = useState("自定义线(X)");
  return (
    <aside className={`flex w-[165px] shrink-0 flex-col ${SONG_FONT}`}>
      <div className="flex h-4 shrink-0 items-center bg-[#0055e5] text-white">
        <h2 className="flex-1 leading-4">模块导航栏</h2>
        <svg viewBox="0 0 32 12" className="mr-1 h-3 w-8" aria-hidden="true">
          <path d="M7 2h5M8 2v5M11 2v5M5 7h9M9.500 7v4M22 2l8 8M30 2l-8 8" fill="none" stroke="#fff" strokeWidth="1.200" />
        </svg>
      </div>
      <div className="h-px shrink-0 bg-[#f0f0f0]" />
      <PanelButton>工程设置</PanelButton>
      <PanelButton>绘图输入</PanelButton>
      <div className="flex h-7 shrink-0 items-center border-x border-[#a0a0a0] bg-linear-to-b from-white to-[#e8e8e8] pl-[6px]">
        <svg viewBox="0 0 42 16" className="h-4 w-[42px]" aria-hidden="true">
          <path d="M0 4.500h9M4.500 0v9M7 11.500h9M11.500 7v9M23 4.500h9M30 11.500h9" stroke="#000" strokeWidth="3" />
          <path d="M1 4.500h7M4.500 1v7M8 11.500h7M11.500 8v7M24 4.500h7M31 11.500h7" stroke="#0fa89a" />
        </svg>
      </div>
      <div className="flex min-h-0 flex-1 border border-l-2 border-[#828790] bg-white pr-[2px]">
        <ul className="min-w-0 flex-1 overflow-hidden">
          {TREE.map((item, i) => (
            <TreeRow key={i} item={item} selected={item.label === selected} onSelect={() => setSelected(item.label)} />
          ))}
        </ul>
        <div className="flex w-4 shrink-0 flex-col items-center bg-[#f0f0f0]">
          <svg viewBox="0 0 16 17" className="h-[17px] w-4 shrink-0"><path d="M4 11l4-4 4 4" fill="none" stroke="#505050" strokeWidth="2" /></svg>
          <div className="flex-[160]" />
          <div className="w-full flex-[281] bg-[#cdcdcd]" />
          <div className="flex-[9]" />
          <svg viewBox="0 0 16 17" className="h-[17px] w-4 shrink-0"><path d="M4 6l4 4 4-4" fill="none" stroke="#505050" strokeWidth="2" /></svg>
        </div>
      </div>
      <div className="h-px shrink-0" />
      <PanelButton>单构件输入</PanelButton>
      <PanelButton>报表预览</PanelButton>
    </aside>
  );
}

const AXIS_MARKS = [
  { x: 183, y: 221, t: "5" },
  { x: 183, y: 332, t: "B" },
  { x: 183, y: 597, t: "0" },
  { x: 962, y: 662, t: "A1" },
];

function Viewport() {
  return (
    <div className="min-h-0 flex-1 bg-black pr-px">
      <svg viewBox="170 168 1195 507" preserveAspectRatio="xMidYMid slice" className="block h-full w-full" shapeRendering="crispEdges">
        {/* grid axes */}
        <path d="M170 218L687 345L1184 468M170 342L370 168M170 609L669 168M170 553L665 675M1365 281L917 675M1365 306L948 675M1365 329L973 675M1365 334L978 675"
          fill="none" stroke="#f00" />

        {/* slab edge */}
        <path d="M170 375L523 501L545 508L170 415z" fill="#747474" />

        {/* beams */}
        <path d="M889 168H938L571 491L574 493L555 510L522 501L542 484L533 481z" fill="#00e800" />
        <path d="M938 168H1068L932 290L737 462L572 604V610L552 628L554 510L574 493L571 491z" fill="#00b300" />
        <path d="M170 350L542 484L523 502L170 375z" fill="#afafaf" />
        <path d="M170 415L554 510L552 628L170 534z" fill="#009900" />
        <path d="M170 415L554 510" stroke="#00e800" />

        {/* custom slab */}
        <path d="M915 285L1111 337L932 494L737 442z" fill="#0074e8" />
        <path d="M737 442L932 494V513L737 465z" fill="#004e9a" />
        <path d="M932 494L1111 337L1110 357L932 513z" fill="#005bb5" />

        {/* orbit gizmo */}
        <g fill="none" stroke="#fff" strokeOpacity=".45" shapeRendering="auto">
          <circle cx="767.5" cy="421.5" r="225" />
          <circle cx="767.5" cy="196" r="14" />
          <circle cx="767.5" cy="647" r="14" />
          <circle cx="542" cy="421.5" r="14" />
          <circle cx="992.5" cy="421.5" r="14" />
        </g>

        {AXIS_MARKS.map(m => (
          <g key={m.t}>
            <circle cx={m.x} cy={m.y} r="12.5" fill="none" stroke="#008a00" />
            <text x={m.x} y={m.y + 5} textAnchor="middle" fontSize="14" fill="#e8e8e8" fontFamily="'DejaVu Sans Mono', monospace">{m.t}</text>
          </g>
        ))}
        <path d="M170 343L197 319M170 609L197 585M170 218L197 225M948 675L978 648" stroke="#f00" strokeOpacity=".8" />

        {/* axis tripod */}
        <path d="M225 626L240 612" stroke="#f00" strokeWidth="4" />
        <path d="M247 605L236 610L243 616z" fill="#f00" />
        <path d="M227 602l7 6M233 602l-5 6" stroke="#f00" />
        <path d="M225 625L191 617" stroke="#00ff00" strokeWidth="4" />
        <path d="M181 614L192 612L189 622z" fill="#0f0" />
        <path d="M191 606l4 5 4-5M195 611v4" fill="none" stroke="#0f0" />
        <path d="M226 625V594" stroke="#0080ff" strokeWidth="4" />
        <path d="M226 581L221 594H231z" fill="#0080ff" />
        <path d="M218 580h9l-9 8h9" fill="none" stroke="#0080ff" />
      </svg>
    </div>
  );
}

function SnapBar() {
  return (
    <div className="flex h-[33px] shrink-0 items-center bg-[#f0f0f0] pb-1 pl-[2px] pt-px">
      <Bar>
        <Grip />
        <Tool icon="ortho" label="正交" />
        <Tool icon="snap" label="对象捕捉" active />
        <Tool icon="dynIn" label="动态输入" />
      </Bar>
      <Bar className="ml-[3px]">
        <Grip />
        <Tool icon="cross" label="交点" />
        <Tool icon="perp" label="垂点" active />
        <Tool icon="mid" label="中点" active />
        <Tool icon="vertex" label="顶点" />
        <Tool icon="coord" label="坐标" />
      </Bar>
      <Bar className="ml-[5px] text-[#707070]">
        <Grip />
        <Combo label="偏移方式" options={["不偏移"]} width="w-[58px] text-black" />
        <Sep />
        <span className="mx-[3px]">X=</span>
        <Spin label="X 偏移" value="0" width="w-[58px]" />
        <span className="mx-[2px]">mm</span>
        <span className="mx-[3px]">Y=</span>
        <Spin label="Y 偏移" value="0" width="w-[58px]" />
        <span className="mx-[2px]">mm</span>
        <Sep />
        <label className="mx-[2px] flex items-center gap-2 text-black">
          <input type="checkbox" className="size-3 appearance-none border border-[#a0a0a0] bg-[#f6f6f6]" />
          旋转
        </label>
        <Spin label="旋转角度" value="0.000" width="w-[68px]" />
        <span className="mx-[3px]">°</span>
      </Bar>
    </div>
  );
}

function StatusBar() {
  const cell = "flex items-center border border-[#d4d4d4] bg-linear-to-b from-white to-[#f0f0f0] pl-px whitespace-nowrap";
  return (
    <footer className={`flex h-5 shrink-0 gap-[2px] bg-[#f0f0f0] ${SONG_FONT}`}>
      <span className={`${cell} w-[148px]`}>X=79926 Y=-12257</span>
      <span className={`${cell} w-[78px]`}>层高:2.8m</span>
      <span className={`${cell} w-[98px]`}>底标高:20.35m</span>
      <span className={`${cell} w-12`}>1(1)</span>
      <span className={`${cell} flex-1`} />
      <span className={`${cell} w-[70px]`}>731.3 FPS</span>
    </footer>
  );
}

// 24x24 taskbar drawings
const TASKS = [
  { name: "任务视图", art: <path d="M6.500 5.500h11v13h-11zM4 7H2v10h2M20 7h2v10h-2" fill="none" stroke="#fff" strokeWidth="1.200" /> },
  { name: "四叶", art: <><rect x="1" y="1" width="10.500" height="10.500" rx="4" fill="#e6e6e6" /><rect x="12.500" y="1" width="10.500" height="10.500" rx="4" fill="#e6e6e6" /><rect x="1" y="12.500" width="10.500" height="10.500" rx="4" fill="#e6e6e6" /><rect x="12.500" y="12.500" width="10.500" height="10.500" rx="4" fill="#e6e6e6" /><path d="M12 12C9 8 6 10 3 8M12 12c4-3 2-6 4-9M12 12c3 4 6 2 9 4M12 12c-4 3-2 6-4 9" fill="none" stroke="#000b0e" strokeWidth="1.200" /></> },
  { name: "浏览器", art: <><path d="M5 13h14c0-9-14-9-14 0 0 8 11 8 13.500 3" fill="none" stroke="#e8e8e8" strokeWidth="3.500" /><path d="M3 22C-2 16 14 0 21 2c2 1 1 4 0 6" fill="none" stroke="#e8e8e8" strokeWidth="1.500" /></> },
  { name: "提醒", art: <><circle cx="9" cy="13" r="9" fill="none" stroke="#ddd" strokeWidth="1.200" /><path d="M14 12c0-6-9-6-9 1 0 5 7 5 7 1 0-3-4-3-4 0M3 11c1 9 11 10 14 4" fill="none" stroke="#ddd" strokeWidth="1.300" /><path d="M20-3c4 0 4 4 4 7l2 4H14l2-4c0-3 0-7 4-7z" fill="#f5b70a" /><circle cx="20" cy="9" r="1.800" fill="#f5b70a" /></> },
  { name: "Edge", art: <path d="M2 11C3 4 7 2 12 2c6 0 10 4 10 9v2H8.500c0 6 7 7 12 4v4c-7 3.500-15 1-15-7 0-3 2-5 3.500-6-3 .5-5.500 1.500-7 3zM9 9.500h7c0-5-7-5-7 0z" fill="#1178d6" fillRule="evenodd" /> },
  { name: "Internet Explorer", art: <><path d="M6 13h13c0-9-13-9-13 0 0 8 10.500 7 12.500 3" fill="none" stroke="#3ba6ec" strokeWidth="4" /><path d="M3 23C-3 17 14-1 22 1c3 1 1 5 0 7" fill="none" stroke="#f2c531" strokeWidth="2" /></> },
  { name: "文件资源管理器", open: true, art: <><path d="M1 3h8l2 2h12v16H1z" fill="#e8b84a" /><path d="M1 7h22v14H1z" fill="#ffe08a" /><path d="M5 13h14v9h-4v-5H9v5H5z" fill="#3aa5e0" /></> },
  { name: "广联达", open: true, art: <><path d="M23 2c-3 2-6 0-10-1C5 0-1 6 1 14c2 9 13 11 18 6 3-3 3-6 3-9h-9c3 1 5 2 4 4-2 4-9 3-9-2 0-7 9-6 15-11z" fill="#1795e8" /><path d="M5 8C8 4 12 3.500 16 4M4 15c1 4 6 7 11 5" fill="none" stroke="#64ccff" strokeWidth="1.500" /></> },
  { name: "360浏览器", open: true, art: <><circle cx="12" cy="12" r="11" fill="#58b829" /><circle cx="12" cy="12" r="10" fill="none" stroke="#d5f2bd" /><path d="M7 13h10c0-7-10-7-10 0 0 5 7 6 9.500 2.500" fill="none" stroke="#fff" strokeWidth="2.800" /><path d="M3 21C4 12 15 3 23 2" fill="none" stroke="#1b8f1b" strokeWidth="1.500" /></> },
  { name: "记事", open: true, art: <><rect x="0" y="0" width="24" height="24" rx="2" fill="#f29a1f" /><path d="M4 4h15v17H4z" fill="#fff7e2" /><path d="M6 9h8M6 13h7M6 17h10" stroke="#9b5a18" strokeWidth="1.200" /><path d="M21 2L11 14l-1 4 4-2L23 4z" fill="#c7671a" stroke="#fff" strokeWidth=".7" /></> },
  { name: "GGJ2013", open: true, active: true, art: <><rect width="24" height="24" rx="5" fill="#1590f0" /><path d="M15.500 6.500Q12 4.500 12 8v11M4.500 10q0 3 3 3h9q3 0 3-3M8 16.500q.5 3 4 3t4-3" fill="none" stroke="#fff" strokeWidth="2" /></> },
];

function Taskbar() {
  return (
    <div className="flex h-10 shrink-0 items-stretch bg-[#000b0e] text-white">
      <button type="button" aria-label="开始" className="flex w-12 shrink-0 items-center justify-center bg-black">
        <svg viewBox="0 0 16 16" className="size-4"><path d="M0 2.300l6.500-1v6.200H0zM7.500 1.200L16 0v7.500H7.500zM0 8.500h6.500v6.200l-6.500-1zM7.500 8.500H16V16l-8.500-1.200z" fill="#fff" /></svg>
      </button>
      <label className="flex w-[344px] shrink-0 items-center bg-[#333]">
        <svg viewBox="0 0 24 24" className="ml-2 size-6 shrink-0"><circle cx="12" cy="12" r="9" fill="none" stroke="#f2f2f2" strokeWidth="3" /></svg>
        <input aria-label="搜索" placeholder="在这里输入你要搜索的内容" className="ml-1 min-w-0 flex-1 bg-transparent text-sm outline-none placeholder:text-[#9c9c9c]" />
        <svg viewBox="0 0 16 18" className="mr-3 h-[18px] w-4 shrink-0"><rect x="5.500" y="1.500" width="5" height="9" rx="1" fill="none" stroke="#bbb" /><path d="M3.500 8v4.500h9V8M8 13v3.500M5 16.500h6" fill="none" stroke="#bbb" /></svg>
      </label>
      {TASKS.map((t, i) => (
        <button key={t.name} type="button" aria-label={t.name}
          className={`flex shrink-0 flex-col items-center ${i < 5 ? "w-[51px]" : "w-12"} ${t.active ? "bg-[#323c3f]" : ""}`}>
          <span className="flex flex-1 items-center"><svg viewBox="0 0 24 24" className="size-[22px] overflow-visible">{t.art}</svg></span>
          <span className={`h-[2px] ${t.active ? "w-full" : "w-[39px]"} ${t.open ? "bg-[#76b9ed]" : ""}`} />
        </button>
      ))}
      <span className="ml-3 self-center">链接</span>
      <span className="ml-5 flex flex-col self-center text-center leading-[17px]"><span>26%</span><span>CPU使用</span></span>
      <div className="ml-auto flex shrink-0 items-center">
        <svg viewBox="0 0 14 14" className="size-[14px]"><path d="M1.500 9.500L7 4l5.500 5.500" fill="none" stroke="#fff" strokeWidth="1.400" /></svg>
        <svg viewBox="0 0 18 16" className="ml-[9px] h-4 w-[18px]"><path d="M6.500 5.500h9v7h-9zM16 8v2" fill="none" stroke="#fff" /><path d="M8 7h6v4H8z" fill="#fff" /><path d="M1 5h4v3H1zM2 3v2M4 3v2M3 8v4h3" fill="none" stroke="#fff" /></svg>
        <svg viewBox="0 0 16 16" className="ml-2 size-4"><path d="M2 13C3 7 8 3 14 3M5 14c1-4 4-7 9-7M8.500 14.500c.5-2.500 2.500-4 5.500-4" fill="none" stroke="#ddd" strokeWidth="1.200" /><circle cx="13" cy="13.500" r="1.500" fill="#fff" /></svg>
        <svg viewBox="0 0 16 16" className="ml-1 size-4"><path d="M1 6h2.500L7 3v10L3.500 10H1z" fill="none" stroke="#fff" /><path d="M9 6q1.500 2 0 4M11 4.500q3 3.500 0 7M13 3q4 5 0 10" fill="none" stroke="#aaa" /></svg>
        <svg viewBox="0 0 24 16" className="ml-[9px] h-4 w-6"><rect x="1" y="2" width="22" height="12" fill="none" stroke="#fff" strokeWidth="1.200" /><path d="M3.500 5h17M3.500 8h17" stroke="#fff" strokeDasharray="2 1" /><path d="M6 11.500h12" stroke="#fff" strokeWidth="1.300" /></svg>
        <span className="ml-[9px] text-xl leading-none">A</span>
        <svg viewBox="0 0 16 16" className="ml-[14px] size-4"><rect x="1" y="1" width="14" height="14" rx="2" fill="#f4511e" transform="rotate(-8 8 8)" /><path d="M12 5C9 3.500 5 4 5 6c0 2.500 6 1.500 6 4 0 2-4 2-7 1" fill="none" stroke="#fff" strokeWidth="1.800" /></svg>
        <span className="ml-[17px] flex flex-col text-center leading-[18px]"><time>15:40</time><span>2018/6/25</span></span>
        <svg viewBox="0 0 18 18" className="ml-[19px] size-[18px]"><path d="M1.500 2.500h15v11h-4v3l-3-3h-8z" fill="none" stroke="#fff" strokeWidth="1.200" /></svg>
        <span className="ml-5 mr-1 h-10 w-px bg-[#555]" />
      </div>
    </div>
  );
}

export default function App() {
  return (
    <div className={`flex h-screen flex-col overflow-hidden bg-[#f0f0f0] text-xs text-black ${UI_FONT}`}>
      <TitleBar />
      <MenuBar />
      <MainToolbar />
      <div className="flex min-h-0 flex-1 gap-[5px]">
        <div className="flex pb-[3px] pt-px"><Sidebar /></div>
        <main className="flex min-w-0 flex-1 flex-col pt-px">
          <EditToolbars />
          <Viewport />
          <SnapBar />
        </main>
      </div>
      <StatusBar />
      <Taskbar />
    </div>
  );
}
